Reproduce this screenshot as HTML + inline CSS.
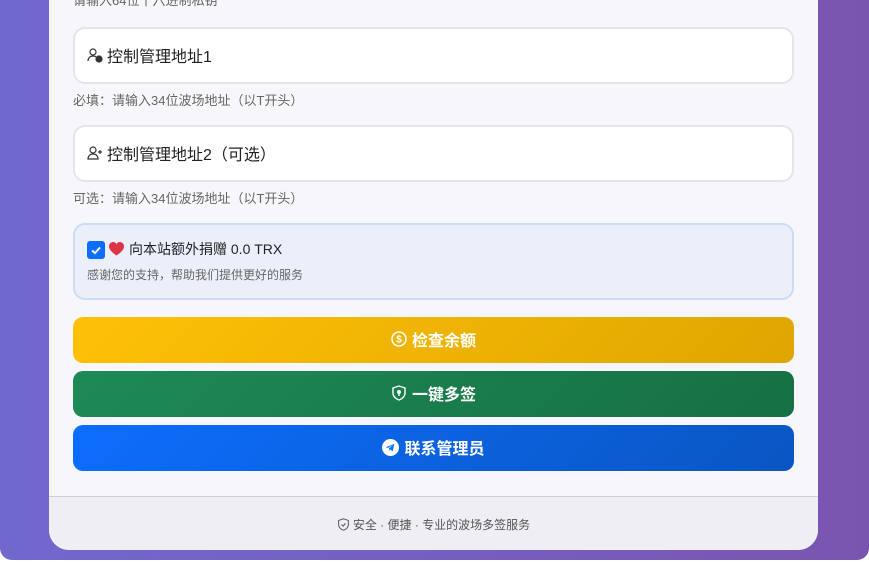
<!DOCTYPE html>
<html><head><meta charset="utf-8"><style>
*{box-sizing:border-box;margin:0;padding:0}
html,body{width:869px;height:562px;overflow:hidden;background:#fff;font-family:"Liberation Sans","Noto Sans CJK SC",sans-serif}
.bg{position:absolute;left:0;top:-20px;width:869px;height:580px;border-radius:12px;background:linear-gradient(90deg,#7168cf,#7a55b0);}
.card{position:absolute;left:49px;top:-30px;width:769px;height:580px;background:#f7f6fb;border-radius:0 0 20px 20px;overflow:hidden}
.hint{position:absolute;left:24px;font-size:13px;color:#666}
.inp{position:absolute;left:24px;width:721px;height:57px;background:#fff;border:2px solid #e3e5ec;border-radius:12px;font-size:16px;color:#222;display:flex;align-items:center;padding-left:12px;padding-bottom:2px}
.inp svg{margin-right:4px}
.don{position:absolute;left:24px;top:253px;width:721px;height:77px;background:#ebeffa;border:2px solid #cddbf5;border-radius:12px}
.btn{position:absolute;left:24px;width:721px;height:46px;border-radius:10px;color:#fff;font-weight:bold;font-size:16px;display:flex;align-items:center;justify-content:center;padding-bottom:2px}
.btn svg{margin-right:5px}
.foot{position:absolute;left:0;top:526px;width:769px;height:54px;background:#efeef4;border-top:1px solid #cfcfd6;font-size:12px;color:#555;display:flex;align-items:center;justify-content:center;padding-top:2px}
</style></head><body>
<div class="bg"></div>
<div class="card">
<div class="hint" style="top:20px">请输入64位十六进制私钥</div>
<div class="inp" style="top:57px"><svg width="16" height="16" viewBox="0 0 16 16" fill="none" stroke="#333" stroke-width="1.2"><circle cx="6" cy="5" r="3"/><path d="M1 14c0-3 2-5 5-5 1.5 0 2.5.4 3 1"/><circle cx="12" cy="12" r="3" fill="#333"/></svg>控制管理地址1</div>
<div class="hint" style="top:120px">必填：请输入34位波场地址（以T开头）</div>
<div class="inp" style="top:155px"><svg width="16" height="16" viewBox="0 0 16 16" fill="none" stroke="#333" stroke-width="1.2"><circle cx="6" cy="5" r="3"/><path d="M1 14c0-3 2-5 5-5s5 2 5 5z"/><path d="M13 5v4M11 7h4"/></svg>控制管理地址2（可选）</div>
<div class="hint" style="top:218px">可选：请输入34位波场地址（以T开头）</div>
<div class="don">
<div style="position:absolute;left:12px;top:16px;width:18px;height:18px;background:#0d6efd;border-radius:3px"><svg width="18" height="18" viewBox="0 0 18 18"><path d="M5 9.5l3 2.5 5-5.5" stroke="#fff" stroke-width="2" fill="none"/></svg></div>
<svg style="position:absolute;left:34px;top:17px" width="15" height="14" viewBox="0 0 16 15"><path d="M8 14.5C3 11 0 8 0 4.5 0 2 2 0 4.3 0 6 0 7.3 1 8 2.3 8.7 1 10 0 11.7 0 14 0 16 2 16 4.5 16 8 13 11 8 14.5z" fill="#dc3545"/></svg>
<div style="position:absolute;left:54px;top:14px;font-size:14px;color:#222">向本站额外捐赠 0.0 TRX</div>
<div style="position:absolute;left:12px;top:41px;font-size:12px;color:#666">感谢您的支持，帮助我们提供更好的服务</div>
</div>
<div class="btn" style="top:347px;background:linear-gradient(135deg,#ffc107,#dea600)"><svg width="16" height="16" viewBox="0 0 16 16" fill="none" stroke="#fff" stroke-width="1.5"><circle cx="8" cy="8" r="7"/><text x="8" y="11.5" font-size="10" fill="#fff" stroke="none" text-anchor="middle" font-family="Liberation Sans">$</text></svg>检查余额</div>
<div class="btn" style="top:401px;background:linear-gradient(135deg,#1d8a55,#167043)"><svg width="16" height="16" viewBox="0 0 16 16" fill="none" stroke="#fff" stroke-width="1.4"><path d="M8 1l6 2v5c0 3.5-3 6-6 7-3-1-6-3.5-6-7V3z"/><circle cx="8" cy="7" r="1.3" fill="#fff"/><path d="M8 8v3"/></svg>一键多签</div>
<div class="btn" style="top:455px;background:linear-gradient(135deg,#0d6efd,#0a56c2)"><svg width="17" height="17" viewBox="0 0 16 16"><circle cx="8" cy="8" r="8" fill="#fff"/><path d="M3.5 7.8l8-3.2-1.4 7-2.4-1.8-1.2 1.2.2-2.2 3.6-3.2-4.6 2.8z" fill="#0d6efd"/></svg>联系管理员</div>
<div class="foot"><svg width="13" height="13" viewBox="0 0 16 16" fill="none" stroke="#555" stroke-width="1.2" style="margin-right:3px"><path d="M8 1l6 2v5c0 3.5-3 6-6 7-3-1-6-3.5-6-7V3z"/><path d="M5.5 8l2 2 3-3.5"/></svg>安全 · 便捷 · 专业的波场多签服务</div>
</div>
</body></html>
